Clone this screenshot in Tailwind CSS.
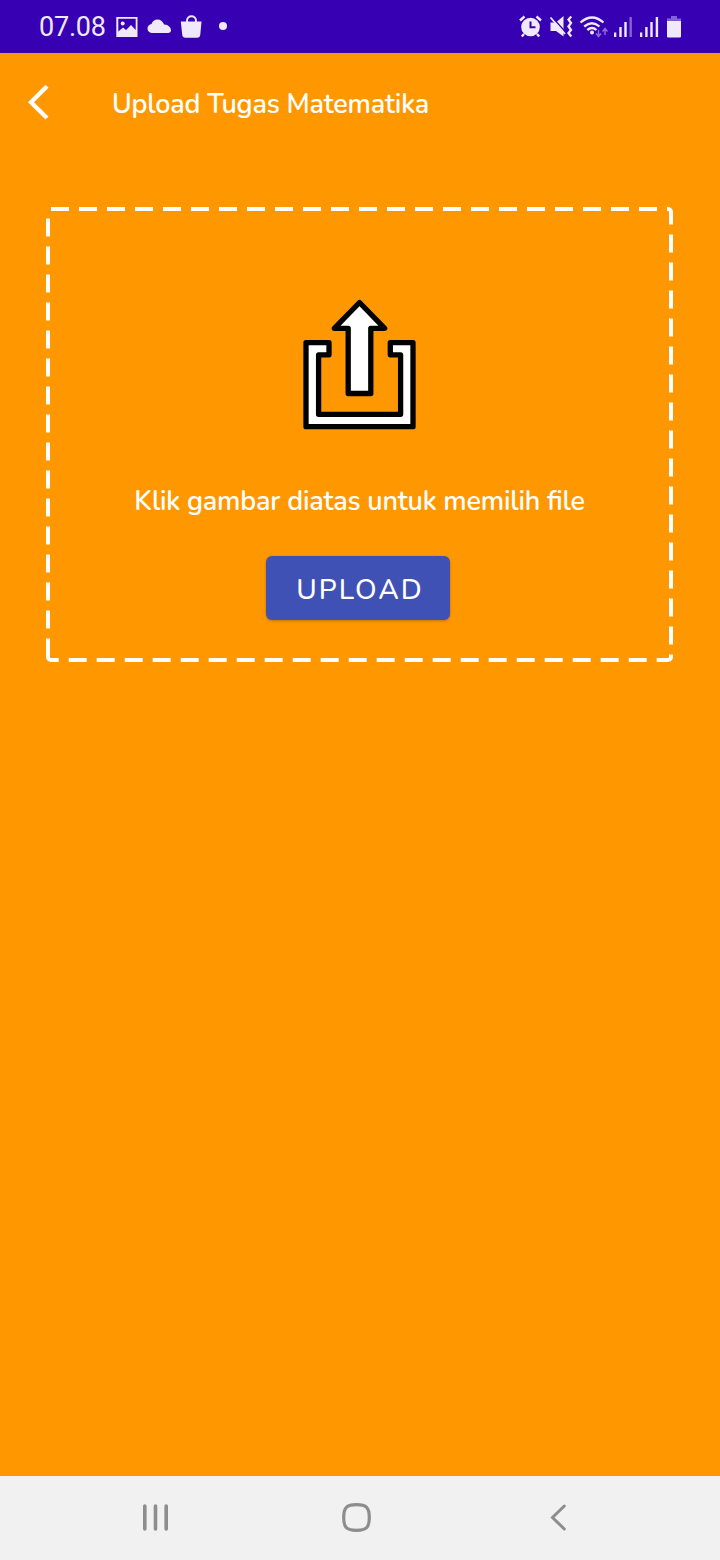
<!DOCTYPE html>
<html lang="id">
<head>
<meta charset="utf-8">
<title>Upload Tugas</title>
<script src="https://cdn.jsdelivr.net/npm/@tailwindcss/browser@4"></script>
</head>
<body class="flex h-[1560px] w-[720px] flex-col overflow-hidden bg-[#ff9800] font-['Nunito',Lato,sans-serif] text-white">
  <header class="flex h-[53px] shrink-0 justify-between bg-[#3700b3] pl-[39px] text-[#f0e9fb]">
    <div class="flex">
      <span class="w-[77px] whitespace-nowrap pt-px font-[Roboto,sans-serif] text-[27px] leading-[53px] tracking-[-0.2px]">07.08</span>
      <svg class="h-[53px] w-[120px]" viewBox="116 0 120 53" fill="currentColor">
        <path fill-rule="evenodd" d="M116.300 17H137.500V37H116.300ZM118.300 18.700V31.500L123 27.500L126 30L131 25L135.700 30V18.700Z"/>
        <circle cx="122.700" cy="23.500" r="2"/>
        <path d="M153 33C149.500 33 147.500 31 147.500 28.500C147.500 26 149.300 24.300 151.500 24C152.500 21 154.600 19.500 157.500 19.500C160.700 19.500 163 21.500 164 24.500C168 24.200 171 27.500 171 30.300C171 32 169.800 33 168 33Z"/>
        <path d="M180.800 21.500H201.500L200.300 34.500Q200 37.700 197 37.700H185.500Q182.500 37.700 182.200 34.500Z"/>
        <path d="M187 24V21C187 14.800 196 14.800 196 21V24" fill="none" stroke="currentColor" stroke-width="2"/>
        <circle cx="223" cy="26" r="4"/>
      </svg>
    </div>
    <svg class="h-[53px] w-[210px]" viewBox="510 0 210 53" fill="currentColor">
      <circle cx="530.500" cy="27" r="9.300"/>
      <path d="M520 20.500L524.500 16.500M541 20.500L536.500 16.500M524 34L521.800 36.500M537 34L539.200 36.500" stroke="currentColor" stroke-width="2.400"/>
      <path d="M530.500 21.500V27.300H535.500" fill="none" stroke="#3700b3" stroke-width="2"/>
      <path d="M550.500 22.500H556L563.500 16V36.500L556 31H550.500Z"/>
      <path d="M551.500 16.500L565 31.500" stroke="#3700b3" stroke-width="1.500"/>
      <path d="M550.500 17.500L565 34" stroke="currentColor" stroke-width="1.800"/>
      <path d="M571.300 16.500L568.500 19.500L571 23L568.500 26.500L571 30L568.500 33L571.300 36.500" fill="none" stroke="currentColor" stroke-width="2.300"/>
      <path d="M580.500 22.500Q592 12.500 603.500 22.500M584.200 26.500Q592 20 599.500 26.500M587.300 30Q592 26 596.500 30" fill="none" stroke="currentColor" stroke-width="2.300"/>
      <circle cx="592" cy="32.500" r="2"/>
      <path d="M598.500 30V36M596 33.500L598.500 36.500L601 33.500M605 35V29M602.500 31.500L605 28.500L607.500 31.500" fill="none" stroke="#8b69d4" stroke-width="1.500"/>
      <path d="M614 32.500h2.300V37H614zM619.300 27h2.400V37h-2.400zM624.300 22h2.400V37h-2.400zM640 32.500h2.300V37H640zM645.200 27h2.400V37h-2.400zM650.300 22h2.400V37h-2.400zM655.700 17h2.400V37h-2.400zM667 20.800H681V36.500Q681 37.500 680 37.500H668Q667 37.500 667 36.500Z"/>
      <path fill="#8462d1" d="M629.500 17h2.400V37h-2.400zM671 16h6v2.500h4v2.300h-14v-2.300h4z"/>
    </svg>
  </header>

  <div class="flex h-[102px] shrink-0 items-center">
    <svg class="h-[102px] w-[112px] shrink-0" viewBox="0 53 112 102" fill="none" stroke="#fff" stroke-width="4.300"><path d="M47 86.200L31 102.200L47 118"/></svg>
    <h1 class="whitespace-nowrap text-[27px] font-semibold leading-none tracking-[-0.220px]">Upload Tugas Matematika</h1>
  </div>

  <main class="mt-[52px] ml-[46px] grid h-[455px] w-[627px] shrink-0">
    <svg class="col-start-1 row-start-1 h-[455px] w-[627px]" viewBox="46 207 627 455" fill="none" stroke="#fff" stroke-width="4" stroke-dasharray="18 10">
      <path d="M51 209H668A3 3 0 0 1 671 212V657A3 3 0 0 1 668 660"/>
      <path stroke-dashoffset="6.700" d="M668 660H51A3 3 0 0 1 48 657"/>
      <path stroke-dashoffset="-0.300" d="M48 656.700V212"/>
      <path d="M48 657.200V655"/>
    </svg>
    <div class="col-start-1 row-start-1 flex flex-col items-center pt-[83px]">
      <svg class="h-[150px] w-[130px]" viewBox="295 290 130 150" fill="#fff" stroke="#000" stroke-width="5.300" stroke-linejoin="round">
        <path d="M306 342.700H329V354.800H318.600V414.300H400.600V354.800H390.300V342.700H413V426.700H306Z"/>
        <path d="M359.500 302.500L384.700 328.300H370.800V393.500H348.200V328.300H334.300Z"/>
      </svg>
      <p class="mt-[44px] whitespace-nowrap text-[27px] font-semibold leading-[36px] tracking-[-0.200px] [font-feature-settings:'liga'_1]">Klik gambar diatas untuk memilih file</p>
      <button class="mt-[36px] mr-[3px] h-[64px] w-[184px] rounded-[6px] bg-[#3f51b5] pt-[3px] pl-[4px] text-[28px] font-medium tracking-[2px] shadow-[0_1px_3px_rgba(0,0,0,0.25)]">UPLOAD</button>
    </div>
  </main>

  <nav class="mt-auto h-[84px] shrink-0 bg-[#f1f1f1]">
    <svg class="h-[84px] w-[720px]" viewBox="0 1476 720 84" fill="none" stroke="#8d8d8d" stroke-width="3.600" stroke-linecap="round">
      <path d="M144.800 1506V1529M155.500 1506V1529M166.200 1506V1529"/>
      <path stroke-width="3.200" d="M356.500 1504.700C366.500 1504.700 369.300 1507.500 369.300 1517.500S366.500 1530.300 356.500 1530.300S343.700 1527.500 343.700 1517.500S346.500 1504.700 356.500 1504.700Z"/>
      <path stroke-width="3" d="M564.300 1506L552.500 1517.500L564.300 1529"/>
    </svg>
  </nav>
</body>
</html>
